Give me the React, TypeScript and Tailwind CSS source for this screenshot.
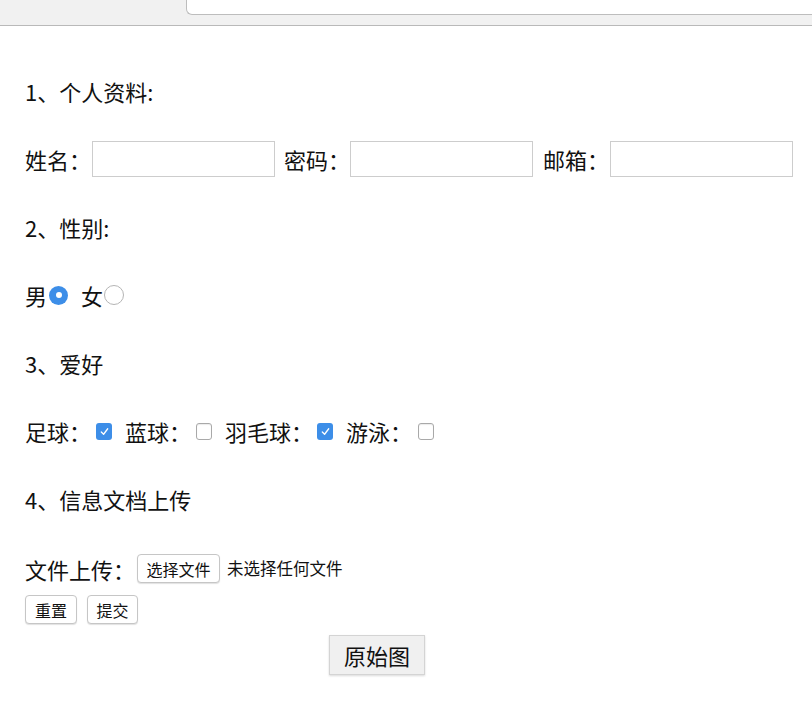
import React from "react";

const Check = ({ on }: { on: boolean }) =>
  on ? (
    <span className="flex h-[17px] w-[16px] items-center justify-center rounded-[3px] bg-[#3d8ee8]">
      <svg width="11" height="11" viewBox="0 0 12 12">
        <path d="M2.5 6.5 L5 9 L9.5 3" fill="none" stroke="white" strokeWidth="1.4" strokeLinecap="round" strokeLinejoin="round" />
      </svg>
    </span>
  ) : (
    <span className="block h-[17px] w-[16px] rounded-[3px] border border-[#a9a9a9] bg-white shadow-[inset_0_1px_1px_rgba(0,0,0,0.08)]" />
  );

const Radio = ({ on }: { on: boolean }) =>
  on ? (
    <span className="flex h-[19px] w-[19px] items-center justify-center rounded-full bg-[#3d8ee8]">
      <span className="block h-[6px] w-[6px] rounded-full bg-white" />
    </span>
  ) : (
    <span className="block h-[20px] w-[20px] rounded-full border border-[#b5b5b5] bg-white" />
  );

const Field = () => (
  <span className="block h-[36px] w-[183px] border border-[#cdcdcd] bg-white" />
);

const SmallBtn = ({ label, w }: { label: string; w: string }) => (
  <span
    className={`flex h-[29px] ${w} items-center justify-center rounded-[4px] border border-[#c6c6c6] bg-white text-[16px] shadow-[0_1px_1px_rgba(0,0,0,0.12)]`}
  >
    {label}
  </span>
);

export default function App() {
  return (
    <div
      className="min-h-[706px] w-[812px] bg-white text-[#111]"
      style={{ fontFamily: '"Noto Sans CJK SC", "Noto Sans", sans-serif' }}
    >
      {/* browser bar remnant */}
      <div className="h-[26px] border-b border-[#b9b9b9] bg-[#f1f1f1]">
        <div className="ml-[186px] h-[15px] rounded-bl-[6px] border-b border-l border-[#bdbdbd] bg-white" />
      </div>

      <div className="flex flex-col pl-[25px] pt-[31px] text-[22px] leading-none">
        <div className="flex h-[68px] items-center">1、个人资料:</div>

        <div className="flex h-[68px] items-center">
          <span>姓名：</span>
          <span className="ml-[1px]"><Field /></span>
          <span className="ml-[9px]">密码：</span>
          <Field />
          <span className="ml-[10px]">邮箱：</span>
          <span className="ml-[1px]"><Field /></span>
        </div>

        <div className="flex h-[68px] items-center">2、性别:</div>

        <div className="flex h-[68px] items-center">
          <span>男</span>
          <span className="ml-[2px]"><Radio on /></span>
          <span className="ml-[13px]">女</span>
          <span className="ml-[1px]"><Radio on={false} /></span>
        </div>

        <div className="flex h-[68px] items-center">3、爱好</div>

        <div className="flex h-[68px] items-center">
          <span>足球：</span>
          <span className="ml-[5px]"><Check on /></span>
          <span className="ml-[13px]">蓝球：</span>
          <span className="ml-[5px]"><Check on={false} /></span>
          <span className="ml-[13px]">羽毛球：</span>
          <span className="ml-[4px]"><Check on /></span>
          <span className="ml-[13px]">游泳：</span>
          <span className="ml-[6px]"><Check on={false} /></span>
        </div>

        <div className="flex h-[68px] items-center">4、信息文档上传</div>

        <div className="flex h-[59px] items-center pt-[12px]">
          <span>文件上传：</span>
          <span className="ml-[2px]"><SmallBtn label="选择文件" w="w-[83px]" /></span>
          <span className="ml-[7px] text-[16.5px]">未选择任何文件</span>
        </div>

        <div className="mt-[3px] flex items-center gap-[10px]">
          <SmallBtn label="重置" w="w-[52px]" />
          <SmallBtn label="提交" w="w-[51px]" />
        </div>

        <div className="mt-[11px] ml-[304px] flex h-[40px] w-[96px] items-center justify-center border border-[#d4d4d4] bg-[#f0f0f0] text-[22px] shadow-[0_1px_2px_rgba(0,0,0,0.15)]">
          原始图
        </div>
      </div>
    </div>
  );
}
